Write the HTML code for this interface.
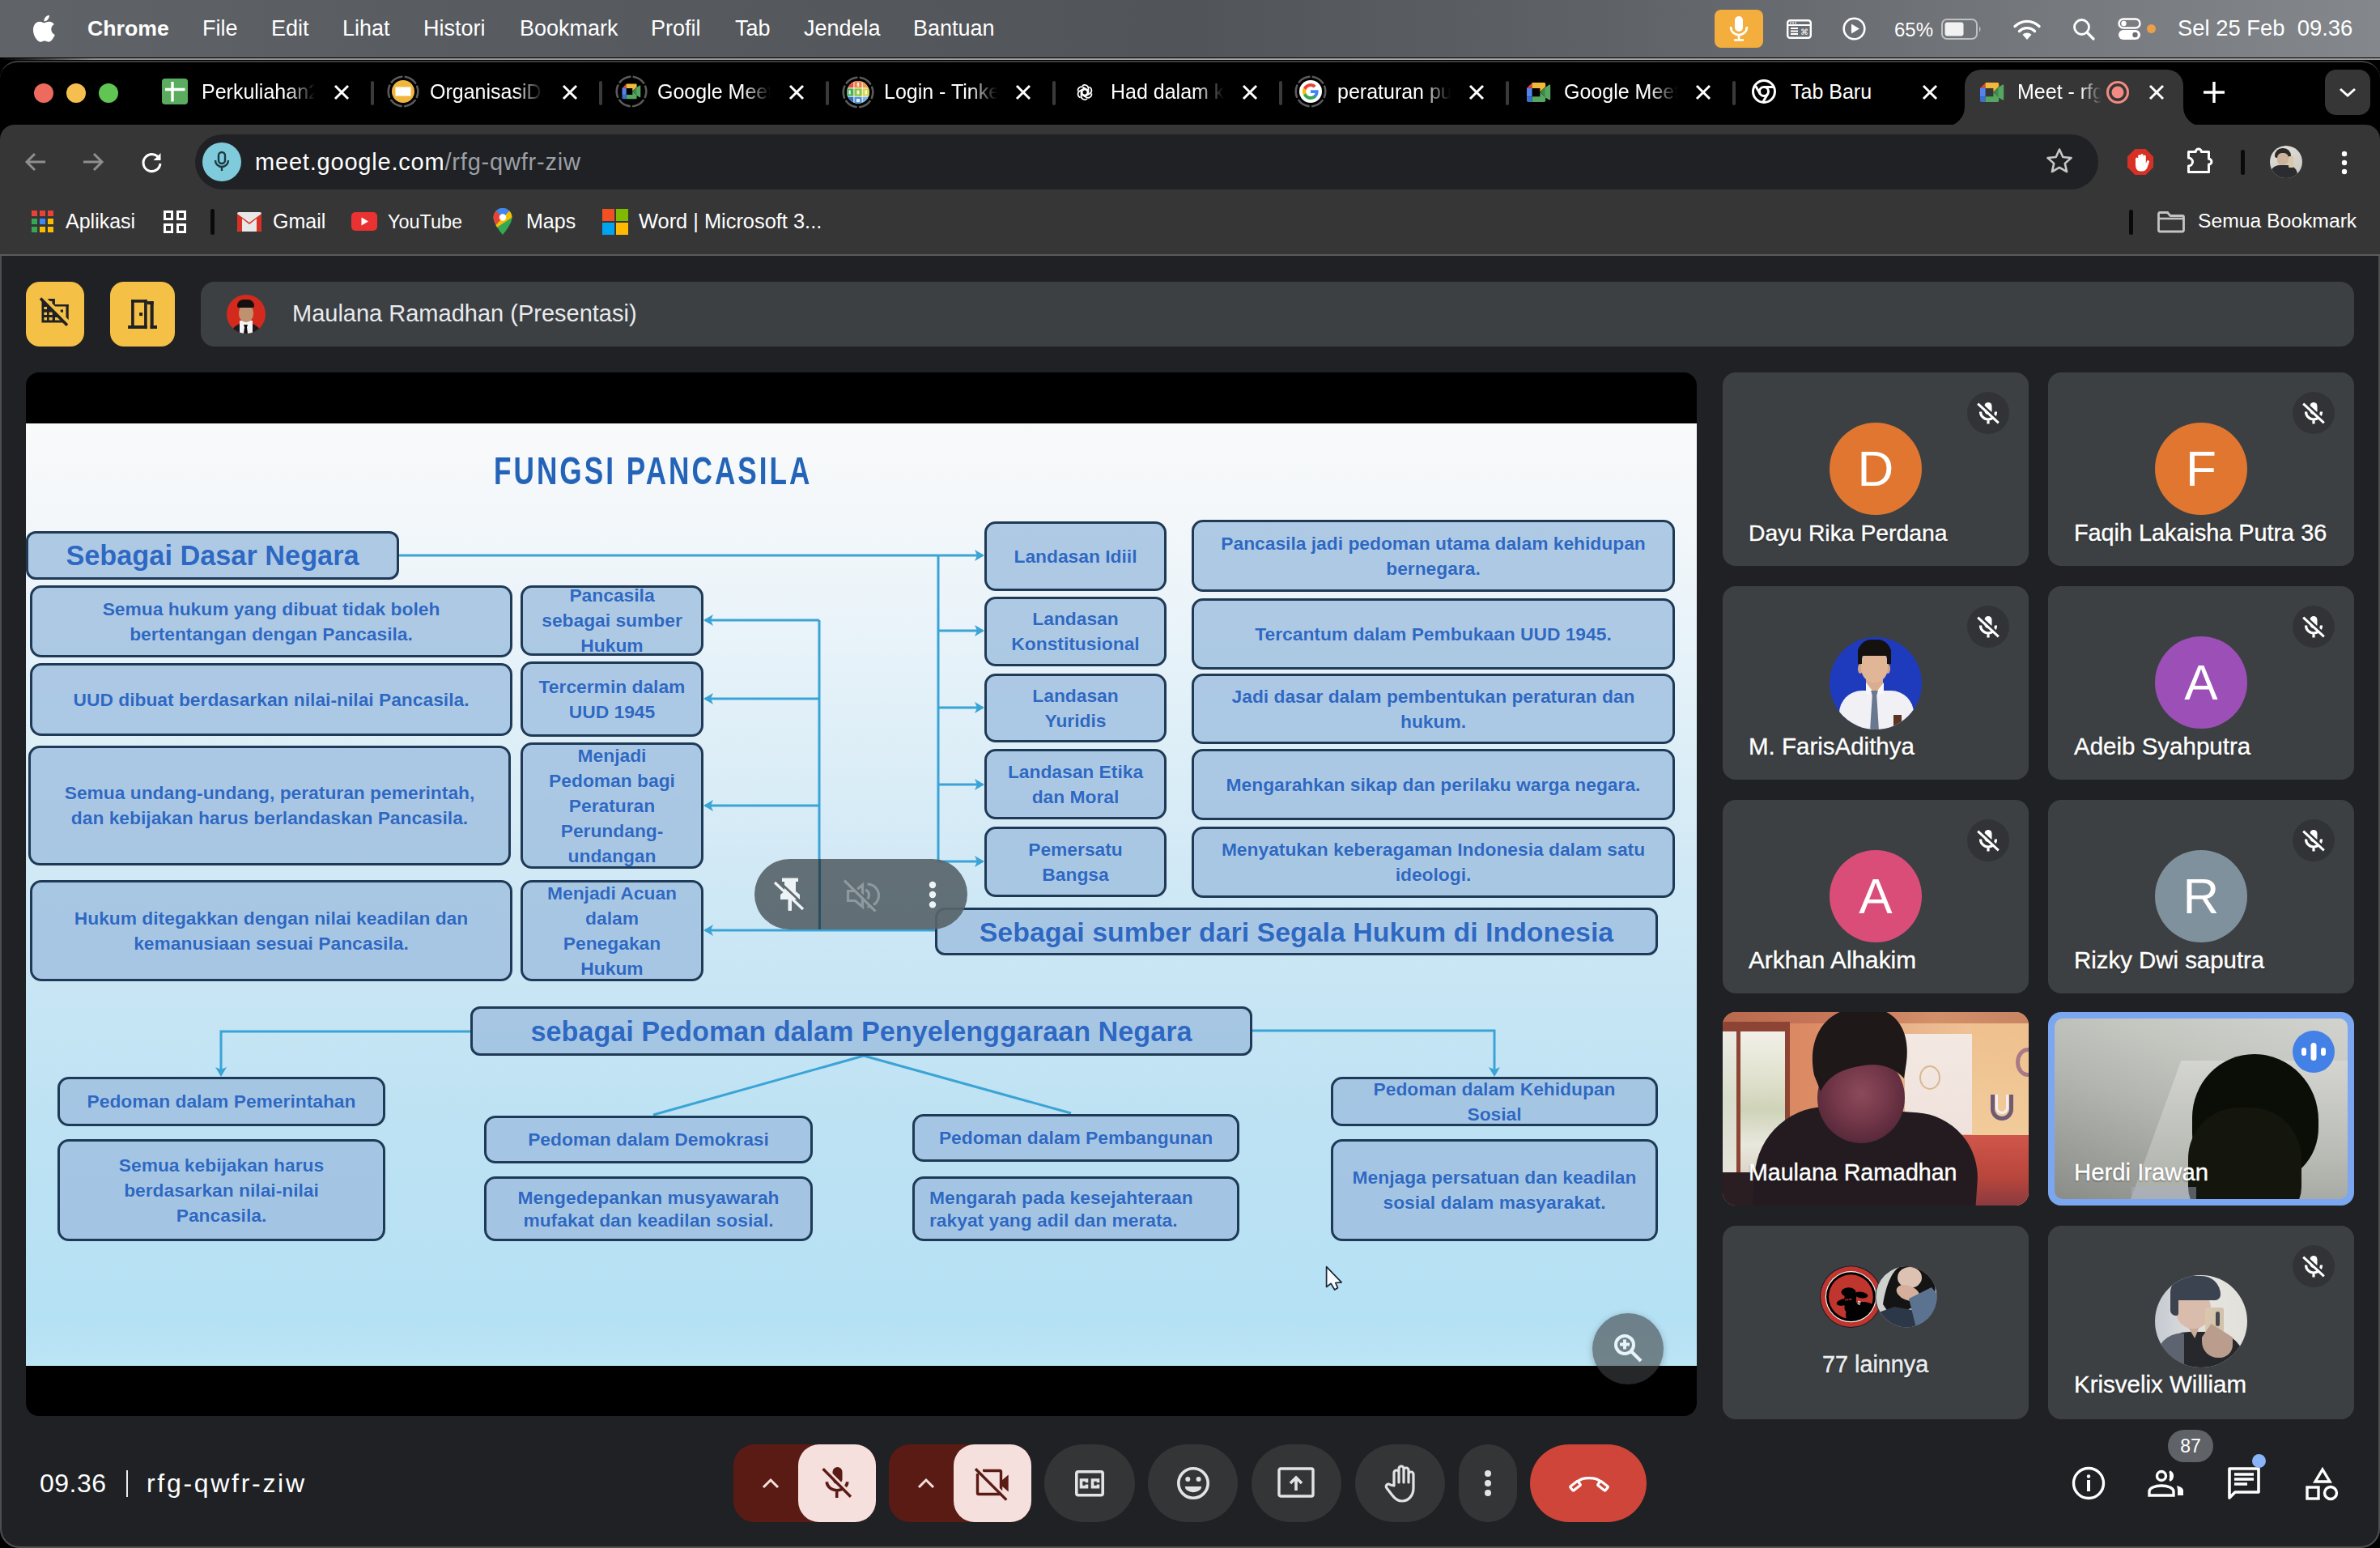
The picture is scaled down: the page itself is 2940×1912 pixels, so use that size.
<!DOCTYPE html>
<html><head><meta charset="utf-8">
<style>
*{margin:0;padding:0;box-sizing:border-box}
html,body{width:2940px;height:1912px;overflow:hidden;background:#000;font-family:"Liberation Sans",sans-serif}
.a{position:absolute}
svg{position:absolute;overflow:visible}
#menubar{left:0;top:0;width:2940px;height:72px;background:linear-gradient(90deg,#606368 0%,#585b60 20%,#515459 50%,#5f6267 68%,#74777b 85%,#84878b 100%)}
.mi{position:absolute;top:18px;font-size:27px;color:#fff;line-height:34px;white-space:nowrap}
#tabstrip{left:0;top:75px;width:2940px;height:97px;background:#000;border-radius:22px 22px 0 0;border-top:2px solid #3e3e3e}
#toolbar{left:0;top:154px;width:2940px;height:162px;background:#363636;border-radius:18px 18px 0 0}
#meet{left:0;top:316px;width:2940px;height:1596px;background:#202124;border-radius:0 0 24px 24px}
.tt{position:absolute;top:98px;font-size:25px;line-height:30px;color:#fff;white-space:nowrap;overflow:hidden;width:140px;-webkit-mask-image:linear-gradient(90deg,#000 75%,transparent 100%)}
.tsep{position:absolute;top:100px;width:4px;height:30px;background:#3a3a3a;border-radius:2px}
.bm{position:absolute;top:258px;font-size:25px;line-height:30px;color:#fff;white-space:nowrap}
.bx{position:absolute;border:3px solid #1f3a56;border-radius:14px;background:rgba(158,190,222,0.8);display:flex;align-items:center;justify-content:center;overflow:visible}
.bx.big{border-radius:12px}
.bt{font-weight:bold;color:#2d68c2;white-space:nowrap;width:100%;text-shadow:0 0 1px rgba(255,255,255,.4)}
.tn{position:absolute;font-size:28.3px;line-height:36px;color:#fff;white-space:nowrap;text-shadow:0 1px 2px rgba(0,0,0,.6);-webkit-text-stroke:0.4px #fff}
.av{position:absolute;width:114px;height:114px;border-radius:50%;color:#fff;font-size:62px;line-height:114px;text-align:center}
</style></head>
<body>
<!-- MENU BAR -->
<div id="menubar" class="a">
<svg style="left:40px;top:18px" width="28" height="34" viewBox="0 0 28 34"><path fill="#fff" d="M23.3 18.1c0-4.1 3.4-6.1 3.5-6.2-1.9-2.8-4.9-3.2-6-3.2-2.5-.3-5 1.5-6.3 1.5-1.3 0-3.3-1.5-5.4-1.4-2.8 0-5.4 1.6-6.8 4.1-2.9 5.1-.7 12.6 2.1 16.7 1.4 2 3 4.2 5.2 4.2 2.1-.1 2.9-1.4 5.4-1.4s3.2 1.4 5.4 1.3c2.3 0 3.7-2 5-4.1 1.6-2.3 2.3-4.6 2.3-4.7-.1 0-4.4-1.7-4.4-6.8zM19.2 5.9c1.1-1.4 1.9-3.3 1.7-5.2-1.6.1-3.6 1.1-4.8 2.5-1 1.2-2 3.1-1.7 5 1.8.1 3.7-.9 4.8-2.3z"/></svg>
<div class="mi" style="left:108px;font-weight:bold;font-size:26.7px">Chrome</div>
<div class="mi" style="left:250px">File</div>
<div class="mi" style="left:335px">Edit</div>
<div class="mi" style="left:423px">Lihat</div>
<div class="mi" style="left:523px">Histori</div>
<div class="mi" style="left:642px">Bookmark</div>
<div class="mi" style="left:804px">Profil</div>
<div class="mi" style="left:908px">Tab</div>
<div class="mi" style="left:993px">Jendela</div>
<div class="mi" style="left:1128px">Bantuan</div>
<!-- status icons -->
<div class="a" style="left:2118px;top:12px;width:60px;height:47px;background:#f3ae3d;border-radius:8px"></div>
<svg style="left:2134px;top:18px" width="28" height="34" viewBox="0 0 28 34"><rect x="9" y="2" width="10" height="19" rx="5" fill="#fff"/><path d="M4 15c0 6 4.5 10 10 10s10-4 10-10" fill="none" stroke="#fff" stroke-width="2.6"/><path d="M14 25v6M8 31.5h12" stroke="#fff" stroke-width="2.6"/></svg>
<svg style="left:2207px;top:24px" width="31" height="24" viewBox="0 0 31 24"><rect x="1.2" y="1.2" width="28.6" height="21.6" rx="3" fill="none" stroke="#fff" stroke-width="2.4"/><path d="M1.5 7h28" stroke="#fff" stroke-width="2"/><circle cx="5" cy="4.2" r="1" fill="#fff"/><circle cx="8" cy="4.2" r="1" fill="#fff"/><circle cx="11" cy="4.2" r="1" fill="#fff"/><path d="M5 11h9M5 14.5h9M5 18h9" stroke="#fff" stroke-width="1.8"/><text x="16.5" y="19" font-size="10" fill="#fff" font-family="Liberation Sans">⌘</text></svg>
<svg style="left:2276px;top:21px" width="29" height="29" viewBox="0 0 29 29"><circle cx="14.5" cy="14.5" r="12.8" fill="none" stroke="#fff" stroke-width="2.6"/><path d="M11 8.5v12l10-6z" fill="#fff"/></svg>
<div class="mi" style="left:2340px;font-size:24px;top:20px">65%</div>
<svg style="left:2398px;top:23px" width="52" height="26" viewBox="0 0 52 26"><rect x="1" y="1" width="43" height="24" rx="6" fill="none" stroke="#bfc1c3" stroke-width="2"/><rect x="4.5" y="4.5" width="23" height="17" rx="3" fill="#f2f2f2"/><path d="M47 9.5c2 1 2 6 0 7z" fill="#bfc1c3"/></svg>
<svg style="left:2486px;top:22px" width="36" height="28" viewBox="0 0 36 28"><path d="M18 27l-5.5-6.2a8 8 0 0 1 11 0z" fill="#fff"/><path d="M8.5 16.5a13.5 13.5 0 0 1 19 0" fill="none" stroke="#fff" stroke-width="3.4" stroke-linecap="round"/><path d="M3 10.5a21.5 21.5 0 0 1 30 0" fill="none" stroke="#fff" stroke-width="3.4" stroke-linecap="round"/></svg>
<svg style="left:2560px;top:22px" width="28" height="28" viewBox="0 0 28 28"><circle cx="11.5" cy="11.5" r="9" fill="none" stroke="#fff" stroke-width="2.8"/><path d="M18 18l8 8" stroke="#fff" stroke-width="3.2" stroke-linecap="round"/></svg>
<svg style="left:2616px;top:22px" width="30" height="28" viewBox="0 0 30 28"><rect x="1.5" y="1.5" width="26" height="11" rx="5.5" fill="none" stroke="#fff" stroke-width="2.4"/><circle cx="7.5" cy="7" r="3.2" fill="#fff"/><rect x="1" y="15" width="27" height="12" rx="6" fill="#fff"/><circle cx="21.5" cy="21" r="3.2" fill="#6a6d71"/></svg>
<div class="a" style="left:2652px;top:30px;width:11px;height:11px;border-radius:50%;background:#e9a049"></div>
<div class="mi" style="left:2690px;font-size:27.4px">Sel 25 Feb&nbsp; 09.36</div>
</div>
<!-- TAB STRIP -->
<div class="a" style="left:0;top:71px;width:2940px;height:6px;background:#000"></div>
<div class="a" style="left:0;top:72px;width:2940px;height:1.5px;background:linear-gradient(90deg,rgba(160,162,164,0) 0%,rgba(160,162,164,.9) 4%,#a4a6a8 60%,#9a9c9e 100%)"></div>
<div id="tabstrip" class="a"></div>
<div class="a" style="left:42px;top:103px;width:24px;height:24px;border-radius:50%;background:#ed6a5e"></div>
<div class="a" style="left:82px;top:103px;width:24px;height:24px;border-radius:50%;background:#f5bf4f"></div>
<div class="a" style="left:122px;top:103px;width:24px;height:24px;border-radius:50%;background:#61c554"></div>
<!-- active tab -->
<div class="a" style="left:2427px;top:86px;width:270px;height:70px;background:#363636;border-radius:20px 20px 0 0"></div>
<svg style="left:2403px;top:131px" width="25" height="25" viewBox="0 0 25 25"><path d="M25 0V25H0A24 24 0 0 0 24 1V0z" fill="#363636"/></svg>
<svg style="left:2696px;top:131px" width="25" height="25" viewBox="0 0 25 25"><path d="M0 0V25H25A24 24 0 0 1 1 1V0z" fill="#363636"/></svg>
<!-- tab 1 -->
<svg style="left:200px;top:97px" width="32" height="32" viewBox="0 0 32 32"><rect width="32" height="32" rx="4" fill="#5aad5e"/><path d="M4 13.5h24.5M13 4v24.5" stroke="#fff" stroke-width="3.4"/></svg>
<div class="tt" style="left:249px">Perkuliahan2</div>
<svg style="left:412px;top:104px" width="20" height="20" viewBox="0 0 20 20"><path d="M2 2l16 16M18 2L2 18" stroke="#fff" stroke-width="3"/></svg>
<div class="tsep" style="left:458px"></div>
<!-- tab 2 -->
<svg style="left:478px;top:93px" width="40" height="40" viewBox="0 0 40 40"><circle cx="20" cy="20" r="18.3" fill="none" stroke="#5a5a5a" stroke-width="2.6" stroke-dasharray="14.6 4.6" stroke-dashoffset="7.4" stroke-linecap="round"/><circle cx="20" cy="20" r="14" fill="#f1b73c"/><rect x="10.5" y="14.5" width="19" height="11" fill="#fff"/></svg>
<div class="tt" style="left:531px">OrganisasiDa</div>
<svg style="left:694px;top:104px" width="20" height="20" viewBox="0 0 20 20"><path d="M2 2l16 16M18 2L2 18" stroke="#fff" stroke-width="3"/></svg>
<div class="tsep" style="left:740px"></div>
<!-- tab 3 -->
<svg style="left:760px;top:93px" width="40" height="40" viewBox="0 0 40 40"><circle cx="20" cy="20" r="18.3" fill="none" stroke="#5a5a5a" stroke-width="2.6" stroke-dasharray="14.6 4.6" stroke-dashoffset="7.4" stroke-linecap="round"/><g transform="translate(8.5,10.5) scale(0.78)"><path d="M0 6.8L6.6 0.4V6.8z" fill="#e5483a"/><path d="M6.6 0H21.5Q23.2 0 23.2 1.7V5L16.4 11.6V7H6.6z" fill="#f1b93b"/><rect x="0" y="6.8" width="6.6" height="10.4" fill="#5384ee"/><path d="M0 17.2H6.6V24H1.7Q0 24 0 22.3z" fill="#3a6fd4"/><path d="M6.6 17.2H16.4V12L23.2 18.2V22.3Q23.2 24 21.5 24H6.6z" fill="#55a661"/><path d="M16.4 11.8L23.2 5.2V18.3z" fill="#3e8a4b"/><path d="M22.6 6.2L27.8 2.6Q29.2 2 29.2 3.5V20.5Q29.2 22 27.8 21.4L22.6 18.2z" fill="#55a661"/></g></svg>
<div class="tt" style="left:812px">Google Meet</div>
<svg style="left:974px;top:104px" width="20" height="20" viewBox="0 0 20 20"><path d="M2 2l16 16M18 2L2 18" stroke="#fff" stroke-width="3"/></svg>
<div class="tsep" style="left:1020px"></div>
<!-- tab 4 -->
<svg style="left:1040px;top:94px" width="40" height="40" viewBox="0 0 40 40"><defs><clipPath id="tkc"><circle cx="20" cy="20" r="13.9"/></clipPath></defs><circle cx="20" cy="20" r="18.3" fill="none" stroke="#5a5a5a" stroke-width="2.6" stroke-dasharray="14.6 4.6" stroke-dashoffset="7.4" stroke-linecap="round"/><g clip-path="url(#tkc)"><rect x="5" y="5" width="30" height="30" fill="#f4f4f4"/><rect x="5" y="5" width="9.3" height="9.3" fill="#e9503a"/><rect x="15.4" y="5" width="9.2" height="9.3" fill="#ee7d45"/><rect x="25.7" y="5" width="9.3" height="9.3" fill="#f29a45"/><rect x="5" y="15.4" width="9.3" height="9.2" fill="#4caf5a"/><rect x="15.4" y="15.4" width="9.2" height="9.2" fill="#8cc43a"/><rect x="25.7" y="15.4" width="9.3" height="9.2" fill="#d8d84a"/><rect x="5" y="25.7" width="9.3" height="9.3" fill="#2f6fc4"/><rect x="15.4" y="25.7" width="9.2" height="9.3" fill="#4f94d4"/><rect x="25.7" y="25.7" width="9.3" height="9.3" fill="#78b4e4"/></g><g fill="#fff" opacity=".85"><rect x="18.8" y="8" width="2.4" height="5"/><rect x="8.5" y="17.5" width="2.2" height="5"/><rect x="18.5" y="17.5" width="3" height="5"/><rect x="28.5" y="17.5" width="2.6" height="5"/><rect x="18" y="28" width="4" height="4"/></g></svg>
<div class="tt" style="left:1092px">Login - Tinker</div>
<svg style="left:1254px;top:104px" width="20" height="20" viewBox="0 0 20 20"><path d="M2 2l16 16M18 2L2 18" stroke="#fff" stroke-width="3"/></svg>
<div class="tsep" style="left:1300px"></div>
<!-- tab 5 chatgpt -->
<svg style="left:1328px;top:102px" width="24" height="24" viewBox="0 0 32 32"><g fill="none" stroke="#fff" stroke-width="2.3"><g transform="rotate(0 16 16)"><path d="M12 5.5a6 6 0 0 1 10 4v8l-6 3.5"/></g><g transform="rotate(60 16 16)"><path d="M12 5.5a6 6 0 0 1 10 4v8l-6 3.5"/></g><g transform="rotate(120 16 16)"><path d="M12 5.5a6 6 0 0 1 10 4v8l-6 3.5"/></g><g transform="rotate(180 16 16)"><path d="M12 5.5a6 6 0 0 1 10 4v8l-6 3.5"/></g><g transform="rotate(240 16 16)"><path d="M12 5.5a6 6 0 0 1 10 4v8l-6 3.5"/></g><g transform="rotate(300 16 16)"><path d="M12 5.5a6 6 0 0 1 10 4v8l-6 3.5"/></g></g></svg>
<div class="tt" style="left:1372px">Had dalam k</div>
<svg style="left:1534px;top:104px" width="20" height="20" viewBox="0 0 20 20"><path d="M2 2l16 16M18 2L2 18" stroke="#fff" stroke-width="3"/></svg>
<div class="tsep" style="left:1580px"></div>
<!-- tab 6 google -->
<svg style="left:1599px;top:93px" width="40" height="40" viewBox="0 0 40 40"><circle cx="20" cy="20" r="18.3" fill="none" stroke="#5a5a5a" stroke-width="2.6" stroke-dasharray="14.6 4.6" stroke-dashoffset="7.4" stroke-linecap="round"/><circle cx="20" cy="20" r="14" fill="#fff"/><g transform="translate(10,10) scale(0.833)"><path d="M23.5 12.3c0-.8-.1-1.6-.2-2.3H12v4.4h6.5a5.5 5.5 0 0 1-2.4 3.6v3h3.9c2.2-2.1 3.5-5.1 3.5-8.7z" fill="#4285f4"/><path d="M12 24c3.2 0 6-1.1 8-2.9l-3.9-3c-1.1.7-2.5 1.2-4.1 1.2-3.1 0-5.8-2.1-6.7-5H1.3v3.1A12 12 0 0 0 12 24z" fill="#34a853"/><path d="M5.3 14.3a7.2 7.2 0 0 1 0-4.6V6.6H1.3a12 12 0 0 0 0 10.8z" fill="#fbbc04"/><path d="M12 4.8c1.8 0 3.3.6 4.6 1.8l3.4-3.4A12 12 0 0 0 1.3 6.6l4 3.1c.9-2.8 3.6-4.9 6.7-4.9z" fill="#ea4335"/></g></svg>
<div class="tt" style="left:1652px">peraturan pu</div>
<svg style="left:1814px;top:104px" width="20" height="20" viewBox="0 0 20 20"><path d="M2 2l16 16M18 2L2 18" stroke="#fff" stroke-width="3"/></svg>
<div class="tsep" style="left:1860px"></div>
<!-- tab 7 meet -->
<svg style="left:1886px;top:102px" width="30" height="24" viewBox="0 0 30 24"><path d="M0 6.8L6.6 0.4V6.8z" fill="#e5483a"/><path d="M6.6 0H21.5Q23.2 0 23.2 1.7V5L16.4 11.6V7H6.6z" fill="#f1b93b"/><rect x="0" y="6.8" width="6.6" height="10.4" fill="#5384ee"/><path d="M0 17.2H6.6V24H1.7Q0 24 0 22.3z" fill="#3a6fd4"/><path d="M6.6 17.2H16.4V12L23.2 18.2V22.3Q23.2 24 21.5 24H6.6z" fill="#55a661"/><path d="M16.4 11.8L23.2 5.2V18.3z" fill="#3e8a4b"/><path d="M22.6 6.2L27.8 2.6Q29.2 2 29.2 3.5V20.5Q29.2 22 27.8 21.4L22.6 18.2z" fill="#55a661"/></svg>
<div class="tt" style="left:1932px">Google Meet</div>
<svg style="left:2094px;top:104px" width="20" height="20" viewBox="0 0 20 20"><path d="M2 2l16 16M18 2L2 18" stroke="#fff" stroke-width="3"/></svg>
<div class="tsep" style="left:2140px"></div>
<!-- tab 8 chrome -->
<svg style="left:2164px;top:98px" width="30" height="30" viewBox="0 0 30 30"><circle cx="15" cy="15" r="13.5" fill="none" stroke="#fff" stroke-width="3"/><circle cx="15" cy="15" r="5.5" fill="none" stroke="#fff" stroke-width="3"/><path d="M15 9.5h12M10.2 17.8L4.5 8M19.8 17.8l-6 10.3" stroke="#fff" stroke-width="3"/></svg>
<div class="tt" style="left:2212px;-webkit-mask-image:none">Tab Baru</div>
<svg style="left:2374px;top:104px" width="20" height="20" viewBox="0 0 20 20"><path d="M2 2l16 16M18 2L2 18" stroke="#fff" stroke-width="3"/></svg>
<!-- tab 9 active meet -->
<svg style="left:2446px;top:102px" width="30" height="24" viewBox="0 0 30 24"><path d="M0 6.8L6.6 0.4V6.8z" fill="#e5483a"/><path d="M6.6 0H21.5Q23.2 0 23.2 1.7V5L16.4 11.6V7H6.6z" fill="#f1b93b"/><rect x="0" y="6.8" width="6.6" height="10.4" fill="#5384ee"/><path d="M0 17.2H6.6V24H1.7Q0 24 0 22.3z" fill="#3a6fd4"/><path d="M6.6 17.2H16.4V12L23.2 18.2V22.3Q23.2 24 21.5 24H6.6z" fill="#55a661"/><path d="M16.4 11.8L23.2 5.2V18.3z" fill="#3e8a4b"/><path d="M22.6 6.2L27.8 2.6Q29.2 2 29.2 3.5V20.5Q29.2 22 27.8 21.4L22.6 18.2z" fill="#55a661"/></svg>
<div class="tt" style="left:2492px;width:104px">Meet - rfg-qwfr-ziw</div>
<svg style="left:2600px;top:98px" width="32" height="32" viewBox="0 0 32 32"><circle cx="16" cy="16" r="12.5" fill="none" stroke="#f28b82" stroke-width="3"/><circle cx="16" cy="16" r="7.5" fill="#f28b82"/></svg>
<svg style="left:2654px;top:104px" width="20" height="20" viewBox="0 0 20 20"><path d="M2 2l16 16M18 2L2 18" stroke="#fff" stroke-width="3"/></svg>
<svg style="left:2720px;top:99px" width="30" height="30" viewBox="0 0 30 30"><path d="M15 2v26M2 15h26" stroke="#fff" stroke-width="3.4"/></svg>
<div class="a" style="left:2872px;top:86px;width:56px;height:56px;border-radius:14px;background:#363636"></div>
<svg style="left:2888px;top:106px" width="24" height="16" viewBox="0 0 24 16"><path d="M3 4l9 8 9-8" fill="none" stroke="#fff" stroke-width="3"/></svg>
<!-- TOOLBAR -->
<div id="toolbar" class="a"></div>
<div class="a" style="left:0;top:314px;width:2940px;height:2px;background:#5b5b5b"></div>
<svg style="left:30px;top:186px" width="28" height="28" viewBox="0 0 28 28"><path d="M26 14H4M13 4L3 14l10 10" fill="none" stroke="#8e8e8e" stroke-width="3"/></svg>
<svg style="left:101px;top:186px" width="28" height="28" viewBox="0 0 28 28"><path d="M2 14h22M15 4l10 10-10 10" fill="none" stroke="#8e8e8e" stroke-width="3"/></svg>
<svg style="left:174px;top:186px" width="28" height="28" viewBox="0 0 28 28"><path d="M23 10.5A10.5 10.5 0 1 0 24 16" fill="none" stroke="#fff" stroke-width="3"/><path d="M24.5 3v9h-9z" fill="#fff"/></svg>
<div class="a" style="left:241px;top:166px;width:2351px;height:68px;border-radius:34px;background:#202124"></div>
<div class="a" style="left:250px;top:176px;width:48px;height:48px;border-radius:50%;background:#7fcbdc"></div>
<svg style="left:262px;top:186px" width="24" height="28" viewBox="0 0 24 28"><rect x="8" y="2" width="8" height="14" rx="4" fill="none" stroke="#1b3a40" stroke-width="2.4"/><path d="M4 12a8 8 0 0 0 16 0M12 20v5" fill="none" stroke="#1b3a40" stroke-width="2.4"/></svg>
<div class="a" style="left:315px;top:182px;font-size:29px;line-height:36px;color:#fff;white-space:nowrap;letter-spacing:0.8px">meet.google.com<span style="color:#9aa0a6">/rfg-qwfr-ziw</span></div>
<svg style="left:2526px;top:181px" width="36" height="36" viewBox="0 0 36 36"><path d="M18 3.5l4.3 9.5 10.2 1-7.7 6.9 2.3 10.1L18 25.8 8.9 31l2.3-10.1L3.5 14l10.2-1z" fill="none" stroke="#c4c7c5" stroke-width="2.6" stroke-linejoin="round"/></svg>
<svg style="left:2628px;top:184px" width="32" height="32" viewBox="0 0 32 32"><path d="M9.4 0h13.2L32 9.4v13.2L22.6 32H9.4L0 22.6V9.4z" fill="#d93025"/><path d="M10 19V12a1.6 1.6 0 0 1 3.2 0v5V8.5a1.6 1.6 0 0 1 3.2 0V16V7.5a1.6 1.6 0 0 1 3.2 0V16V9a1.6 1.6 0 0 1 3.2 0v9l1.2-3a1.6 1.6 0 0 1 3 1l-2.5 7c-1 2.5-3 4.5-6.5 4.5h-2C12 27.5 10 24 10 19z" fill="#fff"/></svg>
<svg style="left:2700px;top:180px" width="36" height="36" viewBox="0 0 36 36"><path d="M3.5 7.5H12.2A3.6 3.6 0 0 1 19.4 7.5H28.5V16.3A3.4 3.4 0 0 1 28.5 23.1V32.5H3.5V25A5 5 0 0 0 3.5 15Z" fill="none" stroke="#fff" stroke-width="3" stroke-linejoin="round"/></svg>
<div class="a" style="left:2768px;top:185px;width:5px;height:31px;background:#0a0a0a;border-radius:3px"></div>
<div class="a" style="left:2804px;top:180px;width:40px;height:40px;border-radius:50%;background:linear-gradient(160deg,#e3e1dc,#c9c5be);overflow:hidden"><div class="a" style="left:6px;top:3px;width:20px;height:12px;border-radius:10px 10px 3px 3px;background:#2c2a28"></div><div class="a" style="left:9px;top:9px;width:14px;height:15px;border-radius:40%;background:#cdb39b"></div><div class="a" style="left:0px;top:24px;width:34px;height:20px;border-radius:12px 12px 0 0;background:#2b2c2f"></div><div class="a" style="left:23px;top:13px;width:6px;height:14px;border-radius:1px;background:#d9c7a9"></div></div>
<svg style="left:2890px;top:186px" width="12" height="30" viewBox="0 0 12 30"><circle cx="6" cy="4" r="3.2" fill="#fff"/><circle cx="6" cy="15" r="3.2" fill="#fff"/><circle cx="6" cy="26" r="3.2" fill="#fff"/></svg>
<!-- BOOKMARKS -->
<svg style="left:39px;top:260px" width="27" height="27" viewBox="0 0 27 27"><rect x="0" y="0" width="7" height="7" fill="#ea4335"/><rect x="10" y="0" width="7" height="7" fill="#ea4335"/><rect x="20" y="0" width="7" height="7" fill="#ea4335"/><rect x="0" y="10" width="7" height="7" fill="#34a853"/><rect x="10" y="10" width="7" height="7" fill="#4285f4"/><rect x="20" y="10" width="7" height="7" fill="#fbbc04"/><rect x="0" y="20" width="7" height="7" fill="#34a853"/><rect x="10" y="20" width="7" height="7" fill="#fbbc04"/><rect x="20" y="20" width="7" height="7" fill="#fbbc04"/></svg>
<div class="bm" style="left:81px">Aplikasi</div>
<svg style="left:202px;top:260px" width="28" height="28" viewBox="0 0 28 28"><g fill="none" stroke="#fff" stroke-width="3"><rect x="1.5" y="1.5" width="9" height="9"/><rect x="17.5" y="1.5" width="9" height="9"/><rect x="1.5" y="17.5" width="9" height="9"/><rect x="17.5" y="17.5" width="9" height="9"/></g></svg>
<div class="a" style="left:260px;top:258px;width:5px;height:32px;background:#0a0a0a;border-radius:3px"></div>
<svg style="left:293px;top:262px" width="30" height="24" viewBox="0 0 30 24"><rect x="0" y="0" width="30" height="24" rx="2" fill="#e8e8e8"/><path d="M0 2v20a2 2 0 0 0 2 2h4V8l9 7 9-7v16h4a2 2 0 0 0 2-2V2L15 13z" fill="#d93025"/></svg>
<div class="bm" style="left:337px">Gmail</div>
<svg style="left:434px;top:262px" width="32" height="23" viewBox="0 0 32 23"><rect width="32" height="23" rx="5" fill="#ea3233"/><path d="M12.5 6.5v10l8.5-5z" fill="#fff"/></svg>
<div class="bm" style="left:479px;font-size:23.4px;top:259px">YouTube</div>
<svg style="left:609px;top:257px" width="24" height="34" viewBox="0 0 24 34"><path d="M12 0a11.5 11.5 0 0 0-11.5 11.5C.5 20 12 33 12 33s11.5-13 11.5-21.5A11.5 11.5 0 0 0 12 0z" fill="#34a853"/><path d="M12 0a11.5 11.5 0 0 0-8.2 3.4L12 12l8.2-8.6A11.5 11.5 0 0 0 12 0z" fill="#4285f4"/><path d="M3.8 3.4A11.5 11.5 0 0 0 .5 11.5c0 3 1.5 6.5 3 9.5L12 12z" fill="#ea4335"/><path d="M20.2 3.4L12 12l-8.5 9c.5 1 1 2 1.5 2.8L23.5 11.5a11.5 11.5 0 0 0-3.3-8.1z" fill="#fbbc04"/><circle cx="12" cy="11.5" r="4.2" fill="#fff"/></svg>
<div class="bm" style="left:650px">Maps</div>
<svg style="left:744px;top:258px" width="32" height="32" viewBox="0 0 32 32"><rect x="0" y="0" width="15" height="15" fill="#f25022"/><rect x="17" y="0" width="15" height="15" fill="#7fba00"/><rect x="0" y="17" width="15" height="15" fill="#00a4ef"/><rect x="17" y="17" width="15" height="15" fill="#ffb900"/></svg>
<div class="bm" style="left:789px;font-size:25.4px">Word | Microsoft 3...</div>
<div class="a" style="left:2630px;top:259px;width:5px;height:31px;background:#0a0a0a;border-radius:3px"></div>
<svg style="left:2665px;top:261px" width="34" height="27" viewBox="0 0 34 27"><path d="M1.5 3a1.5 1.5 0 0 1 1.5-1.5h9.5l3.5 4h15a1.5 1.5 0 0 1 1.5 1.5v16.5a1.5 1.5 0 0 1-1.5 1.5H3a1.5 1.5 0 0 1-1.5-1.5z" fill="none" stroke="#c4c4c4" stroke-width="2.8"/><path d="M2 9h30" stroke="#c4c4c4" stroke-width="2.6"/></svg>
<div class="bm" style="left:2715px;font-size:24.7px">Semua Bookmark</div>
<!-- MEET -->
<div id="meet" class="a"></div>
<div class="a" style="left:0;top:316px;width:2940px;height:1596px;border:2px solid #4d4e50;border-top:0;border-radius:0 0 24px 24px"></div>
<div class="a" style="left:32px;top:348px;width:72px;height:80px;border-radius:17px;background:#f4c046"></div>
<svg style="left:48px;top:367px" width="40" height="40" viewBox="0 0 40 40"><g fill="#202124"><rect x="10.3" y="2" width="9.6" height="3"/><rect x="16.4" y="5" width="3.5" height="6.5"/><rect x="16.4" y="9" width="20.3" height="2.5"/><rect x="33.5" y="9" width="3.2" height="19.3"/><rect x="26.7" y="15.5" width="3.3" height="3.2"/></g><path d="M5 -0.5L38 32.7" stroke="#f4c046" stroke-width="4.5"/><polygon points="3.5,3 3.5,31.5 32,31.5" fill="#202124"/><g fill="#f4c046"><rect x="6.4" y="12" width="3.6" height="3"/><rect x="6.4" y="18.7" width="3.6" height="3.3"/><rect x="12.7" y="18.7" width="4" height="3.3"/><rect x="6.4" y="25" width="3.6" height="3.5"/><rect x="12.7" y="25" width="4" height="3.5"/><polygon points="20,25 23.5,25 27,28.5 20,28.5"/></g><path d="M2 1.5L35 34.7" stroke="#202124" stroke-width="3.6"/></svg>
<div class="a" style="left:136px;top:348px;width:80px;height:80px;border-radius:17px;background:#f4c046"></div>
<svg style="left:156px;top:368px" width="40" height="40" viewBox="0 0 40 40"><g fill="#202124"><rect x="2.1" y="34" width="23.6" height="4"/><rect x="29.6" y="34" width="8.4" height="4"/><rect x="6.1" y="2.1" width="3.6" height="32"/><rect x="6.1" y="2.1" width="19.6" height="3.6"/><rect x="22.1" y="2.1" width="3.6" height="36"/><rect x="25.7" y="4.1" width="8" height="4"/><rect x="29.6" y="4.1" width="4.1" height="34"/><rect x="16.1" y="18.1" width="4" height="4"/></g></svg>
<div class="a" style="left:248px;top:348px;width:2660px;height:80px;border-radius:17px;background:#3c4043"></div>
<div class="a" style="left:280px;top:364px;width:48px;height:48px;border-radius:50%;background:#d42a1e;overflow:hidden">
 <div class="a" style="left:4px;top:35px;width:40px;height:20px;border-radius:18px 18px 0 0;background:#1c1c1e"></div>
 <div class="a" style="left:15.5px;top:32px;width:16px;height:16px;background:#f4f4f6"></div>
 <div class="a" style="left:21px;top:37px;width:5px;height:11px;background:#111;clip-path:polygon(0 0,100% 0,80% 30%,100% 100%,0 100%,20% 30%)"></div>
 <div class="a" style="left:14.5px;top:12px;width:18.5px;height:22px;border-radius:45% 45% 48% 48%;background:#c0916f"></div>
 <div class="a" style="left:13px;top:6px;width:21px;height:10px;border-radius:10px 10px 3px 3px;background:#141010"></div>
</div>
<div class="a" style="left:361px;top:369px;font-size:29px;line-height:36px;color:#e8eaed;white-space:nowrap">Maulana Ramadhan (Presentasi)</div>
<!-- presentation frame -->
<div class="a" style="left:32px;top:460px;width:2064px;height:1289px;border-radius:16px;background:#000;overflow:hidden">
 <div id="slide" class="a" style="left:0;top:63px;width:2064px;height:1164px;background:linear-gradient(180deg,#f9fafa 0%,#f3f7fa 10%,#e6f2f9 25%,#cfe8f5 50%,#bde2f3 75%,#b5e1f4 95%,#bce5f5 100%)">
 <div class="a" style="left:578px;top:33px;font-size:47.5px;line-height:52px;font-weight:bold;color:#2464b8;white-space:nowrap;transform:scaleX(0.74);transform-origin:0 0;letter-spacing:4.1px">FUNGSI PANCASILA</div>
<svg class="a" style="left:0;top:0" width="2064" height="1164" viewBox="0 0 2064 1164"><g stroke="#3aa4d6" stroke-width="3" fill="none"><path d="M461,163 L1182,163"/><polygon points="1184,163 1172,156 1175,163 1172,170" fill="#3aa4d6" stroke="none"/><path d="M1127,163 L1127,541"/><path d="M1127,256 L1182,256"/><polygon points="1184,256 1172,249 1175,256 1172,263" fill="#3aa4d6" stroke="none"/><path d="M1127,351 L1182,351"/><polygon points="1184,351 1172,344 1175,351 1172,358" fill="#3aa4d6" stroke="none"/><path d="M1127,446 L1182,446"/><polygon points="1184,446 1172,439 1175,446 1172,453" fill="#3aa4d6" stroke="none"/><path d="M1127,541 L1182,541"/><polygon points="1184,541 1172,534 1175,541 1172,548" fill="#3aa4d6" stroke="none"/><path d="M980,243 L980,626"/><path d="M980,243 L839,243"/><polygon points="837,243 849,236 846,243 849,250" fill="#3aa4d6" stroke="none"/><path d="M980,340 L839,340"/><polygon points="837,340 849,333 846,340 849,347" fill="#3aa4d6" stroke="none"/><path d="M980,472 L839,472"/><polygon points="837,472 849,465 846,472 849,479" fill="#3aa4d6" stroke="none"/><path d="M980,626 L839,626"/><polygon points="837,626 849,619 846,626 849,633" fill="#3aa4d6" stroke="none"/><path d="M980,626 L1123,626"/><path d="M549,751 L241,751 L241,804"/><polygon points="241,807 234,795 241,798 248,795" fill="#3aa4d6" stroke="none"/><path d="M1515,750 L1814,750 L1814,804"/><polygon points="1814,807 1807,795 1814,798 1821,795" fill="#3aa4d6" stroke="none"/><path d="M1035,781 L775,854"/><path d="M1035,781 L1291,852"/></g></svg>
<div class="bx big" style="left:0px;top:133px;width:461px;height:60px"><div class="bt" style="font-size:34.3px;line-height:40px;text-align:center;padding-left:0px;margin-top:0px">Sebagai Dasar Negara</div></div>
<div class="bx" style="left:5px;top:200px;width:596px;height:89px"><div class="bt" style="font-size:22.8px;line-height:31px;text-align:center;padding-left:0px;margin-top:0px">Semua hukum yang dibuat tidak boleh<br>bertentangan dengan Pancasila.</div></div>
<div class="bx" style="left:5px;top:296px;width:596px;height:90px"><div class="bt" style="font-size:22.8px;line-height:31px;text-align:center;padding-left:0px;margin-top:0px">UUD dibuat berdasarkan nilai-nilai Pancasila.</div></div>
<div class="bx" style="left:3px;top:398px;width:596px;height:148px"><div class="bt" style="font-size:22.8px;line-height:31px;text-align:center;padding-left:0px;margin-top:0px">Semua undang-undang, peraturan pemerintah,<br>dan kebijakan harus berlandaskan Pancasila.</div></div>
<div class="bx" style="left:5px;top:564px;width:596px;height:125px"><div class="bt" style="font-size:22.8px;line-height:31px;text-align:center;padding-left:0px;margin-top:0px">Hukum ditegakkan dengan nilai keadilan dan<br>kemanusiaan sesuai Pancasila.</div></div>
<div class="bx" style="left:611px;top:200px;width:226px;height:87px"><div class="bt" style="font-size:22.8px;line-height:31px;text-align:center;padding-left:0px;margin-top:0px">Pancasila<br>sebagai sumber<br>Hukum</div></div>
<div class="bx" style="left:611px;top:294px;width:226px;height:93px"><div class="bt" style="font-size:22.8px;line-height:31px;text-align:center;padding-left:0px;margin-top:0px">Tercermin dalam<br>UUD 1945</div></div>
<div class="bx" style="left:611px;top:394px;width:226px;height:156px"><div class="bt" style="font-size:22.8px;line-height:31px;text-align:center;padding-left:0px;margin-top:0px">Menjadi<br>Pedoman bagi<br>Peraturan<br>Perundang-<br>undangan</div></div>
<div class="bx" style="left:611px;top:564px;width:226px;height:125px"><div class="bt" style="font-size:22.8px;line-height:31px;text-align:center;padding-left:0px;margin-top:0px">Menjadi Acuan<br>dalam<br>Penegakan<br>Hukum</div></div>
<div class="bx" style="left:1184px;top:121px;width:225px;height:86px"><div class="bt" style="font-size:22.8px;line-height:31px;text-align:center;padding-left:0px;margin-top:0px">Landasan Idiil</div></div>
<div class="bx" style="left:1184px;top:214px;width:225px;height:86px"><div class="bt" style="font-size:22.8px;line-height:31px;text-align:center;padding-left:0px;margin-top:0px">Landasan<br>Konstitusional</div></div>
<div class="bx" style="left:1184px;top:309px;width:225px;height:85px"><div class="bt" style="font-size:22.8px;line-height:31px;text-align:center;padding-left:0px;margin-top:0px">Landasan<br>Yuridis</div></div>
<div class="bx" style="left:1184px;top:402px;width:225px;height:87px"><div class="bt" style="font-size:22.8px;line-height:31px;text-align:center;padding-left:0px;margin-top:0px">Landasan Etika<br>dan Moral</div></div>
<div class="bx" style="left:1184px;top:498px;width:225px;height:87px"><div class="bt" style="font-size:22.8px;line-height:31px;text-align:center;padding-left:0px;margin-top:0px">Pemersatu<br>Bangsa</div></div>
<div class="bx" style="left:1440px;top:119px;width:597px;height:89px"><div class="bt" style="font-size:22.8px;line-height:31px;text-align:center;padding-left:0px;margin-top:0px">Pancasila jadi pedoman utama dalam kehidupan<br>bernegara.</div></div>
<div class="bx" style="left:1440px;top:216px;width:597px;height:88px"><div class="bt" style="font-size:22.8px;line-height:31px;text-align:center;padding-left:0px;margin-top:0px">Tercantum dalam Pembukaan UUD 1945.</div></div>
<div class="bx" style="left:1440px;top:309px;width:597px;height:87px"><div class="bt" style="font-size:22.8px;line-height:31px;text-align:center;padding-left:0px;margin-top:0px">Jadi dasar dalam pembentukan peraturan dan<br>hukum.</div></div>
<div class="bx" style="left:1440px;top:402px;width:597px;height:88px"><div class="bt" style="font-size:22.8px;line-height:31px;text-align:center;padding-left:0px;margin-top:0px">Mengarahkan sikap dan perilaku warga negara.</div></div>
<div class="bx" style="left:1440px;top:498px;width:597px;height:88px"><div class="bt" style="font-size:22.8px;line-height:31px;text-align:center;padding-left:0px;margin-top:0px">Menyatukan keberagaman Indonesia dalam satu<br>ideologi.</div></div>
<div class="bx big" style="left:1123px;top:598px;width:893px;height:59px"><div class="bt" style="font-size:33.9px;line-height:40px;text-align:center;padding-left:0px;margin-top:0px">Sebagai sumber dari Segala Hukum di Indonesia</div></div>
<div class="bx big" style="left:549px;top:720px;width:966px;height:61px"><div class="bt" style="font-size:34.2px;line-height:40px;text-align:center;padding-left:0px;margin-top:0px">sebagai Pedoman dalam Penyelenggaraan Negara</div></div>
<div class="bx" style="left:39px;top:807px;width:405px;height:61px"><div class="bt" style="font-size:22.8px;line-height:31px;text-align:center;padding-left:0px;margin-top:0px">Pedoman dalam Pemerintahan</div></div>
<div class="bx" style="left:39px;top:884px;width:405px;height:126px"><div class="bt" style="font-size:22.8px;line-height:31px;text-align:center;padding-left:0px;margin-top:0px">Semua kebijakan harus<br>berdasarkan nilai-nilai<br>Pancasila.</div></div>
<div class="bx" style="left:566px;top:855px;width:406px;height:59px"><div class="bt" style="font-size:22.8px;line-height:31px;text-align:center;padding-left:0px;margin-top:0px">Pedoman dalam Demokrasi</div></div>
<div class="bx" style="left:566px;top:930px;width:406px;height:80px"><div class="bt" style="font-size:22.8px;line-height:28px;text-align:center;padding-left:0px;margin-top:0px">Mengedepankan musyawarah<br>mufakat dan keadilan sosial.</div></div>
<div class="bx" style="left:1095px;top:853px;width:404px;height:59px"><div class="bt" style="font-size:22.8px;line-height:31px;text-align:center;padding-left:0px;margin-top:0px">Pedoman dalam Pembangunan</div></div>
<div class="bx" style="left:1095px;top:930px;width:404px;height:80px"><div class="bt" style="font-size:22.8px;line-height:28px;text-align:left;padding-left:18px;margin-top:0px">Mengarah pada kesejahteraan<br>rakyat yang adil dan merata.</div></div>
<div class="bx" style="left:1612px;top:807px;width:404px;height:61px"><div class="bt" style="font-size:22.8px;line-height:31px;text-align:center;padding-left:0px;margin-top:0px">Pedoman dalam Kehidupan<br>Sosial</div></div>
<div class="bx" style="left:1612px;top:884px;width:404px;height:126px"><div class="bt" style="font-size:22.8px;line-height:31px;text-align:center;padding-left:0px;margin-top:0px">Menjaga persatuan dan keadilan<br>sosial dalam masyarakat.</div></div>
<div class="a" style="left:1935px;top:1099px;width:88px;height:88px;border-radius:50%;background:rgba(62,65,67,0.6);box-shadow:0 2px 8px rgba(0,0,0,.25)"></div>
<svg class="a" style="left:1960px;top:1123px" width="44" height="44" viewBox="0 0 44 44"><circle cx="15" cy="15" r="11" fill="none" stroke="#e8f4fa" stroke-width="4"/><path d="M15 8.5v12M9 14.5h12" stroke="#e8f4fa" stroke-width="3.8"/><path d="M23 23l12 12" stroke="#e8f4fa" stroke-width="4.2"/></svg>
<svg class="a" style="left:1605px;top:1040px" width="22" height="32" viewBox="0 0 22 32"><path d="M1.6 1.7V26.5L7 22.3L11.7 30L15.5 27.7L12.8 21.5L20.2 20.9Z" fill="#f8fbff" stroke="#1b2733" stroke-width="1.7" stroke-linejoin="round"/></svg>
<div class="a" style="left:900px;top:538px;width:263px;height:87px;border-radius:44px;background:rgba(88,100,106,0.92)"></div>
<div class="a" style="left:979px;top:538px;width:3px;height:87px;background:rgba(30,70,90,0.75)"></div>
<svg class="a" style="left:923px;top:561px" width="40" height="44" viewBox="0 0 40 44"><path d="M11 0.5h20v4.5h-3v12l5 4v6H9v-6l5-4v-12h-3z" fill="#eef4f6"/><rect x="18.5" y="26" width="4.5" height="15" rx="1" fill="#eef4f6"/><path d="M3.5 4.5L38.5 37.5" stroke="#5f6a6f" stroke-width="2.6" transform="translate(1.8,-1.8)"/><path d="M2 6L37 39" stroke="#eef4f6" stroke-width="3.2"/></svg>
<svg class="a" style="left:1010px;top:561px" width="44" height="44" viewBox="0 0 44 44"><g fill="none" stroke="#8d999d" stroke-width="3.2"><path d="M5.5 16.5h9l9-7.5v27l-9-7.5h-9z"/><path d="M27 15a7 7 0 0 1 0 13M29.5 8a14 14 0 0 1 0 28"/></g><path d="M1 3.5L39.5 41.5" stroke="#5f6a6f" stroke-width="2.4" transform="translate(1.8,-1.8)"/><path d="M1 3.5L39.5 41.5" stroke="#8d999d" stroke-width="3.2"/></svg>
<svg class="a" style="left:1112px;top:562px" width="16" height="40" viewBox="0 0 16 40"><circle cx="8" cy="8" r="4.2" fill="#eef4f6"/><circle cx="8" cy="20" r="4.2" fill="#eef4f6"/><circle cx="8" cy="32.4" r="4.2" fill="#eef4f6"/></svg>

 </div>
</div>
<div class="a" style="left:2128px;top:460px;width:378px;height:239px;border-radius:16px;background:#3c4043;overflow:hidden"></div>
<div class="av" style="left:2260px;top:522px;background:#e0762f">D</div>
<svg class="a" style="left:2430px;top:484px" width="52" height="52" viewBox="0 0 52 52"><circle cx="26" cy="26" r="26" fill="#323336"/><rect x="21.5" y="13" width="9" height="15" rx="4.5" fill="#fff"/><path d="M16.5 24.5a9.5 9.5 0 0 0 19 0M26 34v5.5" fill="none" stroke="#fff" stroke-width="3.2"/><path d="M13.2 14.6L38.8 38.3" stroke="#323336" stroke-width="3" transform="translate(1.7,-1.8)"/><path d="M13.2 14.6L38.8 38.3" stroke="#fff" stroke-width="3"/></svg>
<div class="tn" style="left:2160px;top:640px;font-size:28.3px">Dayu Rika Perdana</div>
<div class="a" style="left:2530px;top:460px;width:378px;height:239px;border-radius:16px;background:#3c4043;overflow:hidden"></div>
<div class="av" style="left:2662px;top:522px;background:#e0762f">F</div>
<svg class="a" style="left:2832px;top:484px" width="52" height="52" viewBox="0 0 52 52"><circle cx="26" cy="26" r="26" fill="#323336"/><rect x="21.5" y="13" width="9" height="15" rx="4.5" fill="#fff"/><path d="M16.5 24.5a9.5 9.5 0 0 0 19 0M26 34v5.5" fill="none" stroke="#fff" stroke-width="3.2"/><path d="M13.2 14.6L38.8 38.3" stroke="#323336" stroke-width="3" transform="translate(1.7,-1.8)"/><path d="M13.2 14.6L38.8 38.3" stroke="#fff" stroke-width="3"/></svg>
<div class="tn" style="left:2562px;top:640px;font-size:28.8px">Faqih Lakaisha Putra 36</div>
<div class="a" style="left:2128px;top:724px;width:378px;height:239px;border-radius:16px;background:#3c4043;overflow:hidden"></div>
<div class="a" style="left:2260px;top:787px;width:114px;height:114px;border-radius:50%;background:#1f3bbd;overflow:hidden"><div class="a" style="left:45px;top:50px;width:21px;height:18px;background:#d9ad8f"></div><div class="a" style="left:12px;top:66px;width:92px;height:70px;border-radius:28px 28px 0 0;background:#f1f0f5"></div><div class="a" style="left:45px;top:56px;width:22px;height:14px;background:#f7f7fa;clip-path:polygon(0 0,50% 100%,100% 0,100% 100%,0 100%)"></div><div class="a" style="left:50px;top:66px;width:11px;height:50px;background:#69788e;clip-path:polygon(10% 0,90% 0,75% 12%,100% 100%,0 100%,25% 12%)"></div><div class="a" style="left:35px;top:33px;width:6px;height:12px;border-radius:50%;background:#d4a687"></div><div class="a" style="left:69px;top:33px;width:6px;height:12px;border-radius:50%;background:#d4a687"></div><div class="a" style="left:38.5px;top:16px;width:33px;height:40px;border-radius:42% 42% 46% 46%;background:#e1b697"></div><div class="a" style="left:35px;top:3px;width:41px;height:20px;border-radius:20px 20px 4px 4px;background:#15110f"></div><div class="a" style="left:35px;top:15px;width:5px;height:18px;background:#15110f"></div><div class="a" style="left:71px;top:15px;width:5px;height:18px;background:#15110f"></div><div class="a" style="left:79px;top:96px;width:10px;height:16px;background:#5a3522"></div></div>
<svg class="a" style="left:2430px;top:748px" width="52" height="52" viewBox="0 0 52 52"><circle cx="26" cy="26" r="26" fill="#323336"/><rect x="21.5" y="13" width="9" height="15" rx="4.5" fill="#fff"/><path d="M16.5 24.5a9.5 9.5 0 0 0 19 0M26 34v5.5" fill="none" stroke="#fff" stroke-width="3.2"/><path d="M13.2 14.6L38.8 38.3" stroke="#323336" stroke-width="3" transform="translate(1.7,-1.8)"/><path d="M13.2 14.6L38.8 38.3" stroke="#fff" stroke-width="3"/></svg>
<div class="tn" style="left:2160px;top:904px;font-size:29.5px">M. FarisAdithya</div>
<div class="a" style="left:2530px;top:724px;width:378px;height:239px;border-radius:16px;background:#3c4043;overflow:hidden"></div>
<div class="av" style="left:2662px;top:786px;background:#9c4fb7">A</div>
<svg class="a" style="left:2832px;top:748px" width="52" height="52" viewBox="0 0 52 52"><circle cx="26" cy="26" r="26" fill="#323336"/><rect x="21.5" y="13" width="9" height="15" rx="4.5" fill="#fff"/><path d="M16.5 24.5a9.5 9.5 0 0 0 19 0M26 34v5.5" fill="none" stroke="#fff" stroke-width="3.2"/><path d="M13.2 14.6L38.8 38.3" stroke="#323336" stroke-width="3" transform="translate(1.7,-1.8)"/><path d="M13.2 14.6L38.8 38.3" stroke="#fff" stroke-width="3"/></svg>
<div class="tn" style="left:2562px;top:904px;font-size:29.5px">Adeib Syahputra</div>
<div class="a" style="left:2128px;top:988px;width:378px;height:239px;border-radius:16px;background:#3c4043;overflow:hidden"></div>
<div class="av" style="left:2260px;top:1050px;background:#da4d78">A</div>
<svg class="a" style="left:2430px;top:1012px" width="52" height="52" viewBox="0 0 52 52"><circle cx="26" cy="26" r="26" fill="#323336"/><rect x="21.5" y="13" width="9" height="15" rx="4.5" fill="#fff"/><path d="M16.5 24.5a9.5 9.5 0 0 0 19 0M26 34v5.5" fill="none" stroke="#fff" stroke-width="3.2"/><path d="M13.2 14.6L38.8 38.3" stroke="#323336" stroke-width="3" transform="translate(1.7,-1.8)"/><path d="M13.2 14.6L38.8 38.3" stroke="#fff" stroke-width="3"/></svg>
<div class="tn" style="left:2160px;top:1168px;font-size:29.8px">Arkhan Alhakim</div>
<div class="a" style="left:2530px;top:988px;width:378px;height:239px;border-radius:16px;background:#3c4043;overflow:hidden"></div>
<div class="av" style="left:2662px;top:1050px;background:#7f919c">R</div>
<svg class="a" style="left:2832px;top:1012px" width="52" height="52" viewBox="0 0 52 52"><circle cx="26" cy="26" r="26" fill="#323336"/><rect x="21.5" y="13" width="9" height="15" rx="4.5" fill="#fff"/><path d="M16.5 24.5a9.5 9.5 0 0 0 19 0M26 34v5.5" fill="none" stroke="#fff" stroke-width="3.2"/><path d="M13.2 14.6L38.8 38.3" stroke="#323336" stroke-width="3" transform="translate(1.7,-1.8)"/><path d="M13.2 14.6L38.8 38.3" stroke="#fff" stroke-width="3"/></svg>
<div class="tn" style="left:2562px;top:1168px;font-size:29.4px">Rizky Dwi saputra</div>
<div class="a" style="left:2128px;top:1250px;width:378px;height:239px;border-radius:16px;overflow:hidden;background:linear-gradient(90deg,#d4805c 0%,#dc8c64 30%,#e9b48c 60%,#f0c496 85%,#eab88c 100%)">
<div class="a" style="left:0;top:0;width:378px;height:14px;background:linear-gradient(90deg,#b96a4e,#c9785a 40%,#d2906a 70%,#c98462)"></div>
<div class="a" style="left:0;top:12px;width:83px;height:190px;background:#8e4434"></div>
<div class="a" style="left:0;top:24px;width:17px;height:175px;background:linear-gradient(180deg,#ecebe2,#d8dccb 50%,#e6e4da)"></div>
<div class="a" style="left:22px;top:24px;width:55px;height:175px;background:linear-gradient(180deg,#f2f0e8 0%,#dfe0cc 35%,#cfd3b8 55%,#e8e8de 80%,#ddd4c6 100%)"></div>
<div class="a" style="left:225px;top:27px;width:84px;height:124px;background:linear-gradient(180deg,#f4e8e2,#efe2dc)"></div>
<div class="a" style="left:243px;top:66px;width:26px;height:30px;border-radius:50%;border:2px solid #d8b890"></div>
<div class="a" style="left:308px;top:14px;width:70px;height:145px;background:linear-gradient(180deg,#eec08e,#f2cc9c)"></div>
<div class="a" style="left:331px;top:102px;width:28px;height:32px;border-radius:0 0 14px 14px;border:5px solid #6e5a74;border-top:0;background:transparent"></div>
<div class="a" style="left:337px;top:102px;width:16px;height:24px;border-radius:0 0 8px 8px;border:3px solid #f4eef0;border-top:0"></div>
<div class="a" style="left:362px;top:44px;width:30px;height:36px;border-radius:50%;border:5px solid #a87a86;border-right-color:transparent"></div>
<div class="a" style="left:286px;top:152px;width:92px;height:87px;background:linear-gradient(180deg,#d0564a,#b8463c 60%,#8a3a40)"></div>
<div class="a" style="left:0;top:198px;width:120px;height:41px;background:#2a1e22"></div>
<div class="a" style="left:40px;top:120px;width:275px;height:160px;border-radius:90px 80px 0 0;background:#231b1f;transform:rotate(4deg)"></div>

<svg class="a" style="left:0;top:0" width="378" height="239" viewBox="0 0 378 239"><defs><radialGradient id="mface" cx="50%" cy="45%" r="55%"><stop offset="0" stop-color="#8c4a5a"/><stop offset=".55" stop-color="#74384a"/><stop offset="1" stop-color="#58293a"/></radialGradient></defs><ellipse cx="171" cy="106" rx="54" ry="56" fill="url(#mface)"/><path d="M113 78C104 34 124 -2 168 -6C214 -9 232 22 227 62L224 82C214 70 196 62 174 66C150 70 132 76 121 98Z" fill="#1e1819"/></svg>
</div>
<div class="tn" style="left:2160px;top:1430px;font-size:28.6px">Maulana Ramadhan</div>
<div class="a" style="left:2530px;top:1250px;width:378px;height:239px;border-radius:16px;overflow:hidden;background:#7ba7f0">
<div class="a" style="left:8px;top:8px;width:362px;height:223px;border-radius:10px;overflow:hidden;background:linear-gradient(200deg,#d2d3cf 0%,#c4c6c0 30%,#b3b6b0 55%,#9c9e99 80%,#8a8c88 100%)">
<div class="a" style="left:120px;top:52px;width:280px;height:200px;background:linear-gradient(180deg,#d4d5d1,#b8bab4 60%,#9fa19c);transform:skewX(-20deg)"></div>
<div class="a" style="left:170px;top:44px;width:156px;height:160px;border-radius:50% 52% 44% 40%;background:#0b0d07"></div>
<div class="a" style="left:165px;top:110px;width:140px;height:140px;border-radius:45% 45% 30% 30%;background:#14160e"></div>
<div class="a" style="left:95px;top:208px;width:80px;height:20px;background:#a9b4c8;opacity:.45"></div>
</div>
</div>
<div class="a" style="left:2832px;top:1273px;width:52px;height:52px;border-radius:50%;background:#4381e6"></div>
<svg class="a" style="left:2842px;top:1287px" width="32" height="24" viewBox="0 0 32 24"><rect x="1" y="7" width="6" height="10" rx="3" fill="#fff"/><rect x="12.5" y="1" width="7" height="22" rx="3.5" fill="#fff"/><rect x="25" y="7" width="6" height="10" rx="3" fill="#fff"/></svg>
<div class="tn" style="left:2562px;top:1430px;font-size:29.3px">Herdi Irawan</div>
<div class="a" style="left:2128px;top:1514px;width:378px;height:239px;border-radius:16px;background:#3c4043"></div>
<svg class="a" style="left:2240px;top:1556px" width="160" height="94" viewBox="0 0 160 94"><defs><clipPath id="oc1"><circle cx="46.4" cy="45.7" r="29"/></clipPath><clipPath id="oc2"><circle cx="115" cy="45.7" r="37.6"/></clipPath></defs>
<circle cx="46.4" cy="45.7" r="38.3" fill="#0d1a28"/><circle cx="46.4" cy="45.7" r="37.4" fill="#c0352e"/><circle cx="46.4" cy="45.7" r="31.6" fill="#f4f4f4"/><circle cx="46.4" cy="45.7" r="30.4" fill="#000"/><circle cx="46.4" cy="45.7" r="27.4" fill="#c0352e"/>
<g clip-path="url(#oc1)" fill="#000"><ellipse cx="61" cy="68" rx="21" ry="16"/><rect x="38.5" y="40" width="14.5" height="25" rx="5"/><ellipse cx="43.5" cy="40" rx="9" ry="5.8"/><ellipse cx="37" cy="52.3" rx="8.5" ry="4" transform="rotate(-15 37 52.3)"/><ellipse cx="59" cy="43.5" rx="8.5" ry="3.8" transform="rotate(8 59 43.5)"/></g>
<path d="M39.5 50.5a1.6 1.6 0 0 1 3.2 0M44 50a1.6 1.6 0 0 1 3.2 0" fill="none" stroke="#c0352e" stroke-width="1.1"/><path d="M55 51.5l3.5 1M54.5 54l3.5 1" stroke="#eee" stroke-width="1.4"/>
<circle cx="115" cy="45.7" r="38.8" fill="#3c4043"/>
<g clip-path="url(#oc2)"><rect x="75" y="5" width="80" height="90" fill="#cfd1cf"/>
<path d="M86 55C90 30 98 12 108 8H142C150 14 152 30 150 52L140 62L120 60L96 70Z" fill="#141414"/>
<ellipse cx="119" cy="22" rx="15" ry="13" fill="#ddc2b3"/>
<ellipse cx="117" cy="41" rx="15" ry="9" transform="rotate(22 117 41)" fill="#d6ae9c"/>
<path d="M78 66L100 58L122 62L140 48L160 40V95H78Z" fill="#2c3748"/>
<path d="M118 48L146 34L154 44L152 84L128 88Z" fill="#5b7390"/>
</g></svg>
<div class="tn" style="left:2251px;top:1667px;color:#e8eaed;font-size:28.8px">77 lainnya</div>
<div class="a" style="left:2530px;top:1514px;width:378px;height:239px;border-radius:16px;background:#3c4043;overflow:hidden"></div>
<div class="a" style="left:2662px;top:1575px;width:114px;height:114px;border-radius:50%;background:linear-gradient(90deg,#c5cad2 0%,#d6d8da 30%,#e6e4de 60%,#e2e0da 100%);overflow:hidden"><div class="a" style="left:2px;top:70px;width:110px;height:60px;border-radius:40px 40px 0 0;background:#26282c"></div><div class="a" style="left:2px;top:72px;width:34px;height:40px;border-radius:30px 0 0 0;background:#5d6470"></div><div class="a" style="left:36px;top:56px;width:22px;height:22px;background:#c9ab9a;clip-path:polygon(0 0,100% 0,60% 100%)"></div><div class="a" style="left:26px;top:22px;width:43px;height:44px;border-radius:40% 40% 48% 48%;background:#d9bcac"></div><div class="a" style="left:19px;top:1px;width:62px;height:30px;border-radius:30px 34px 10px 6px;background:#3b4350"></div><div class="a" style="left:19px;top:20px;width:10px;height:30px;border-radius:0 0 4px 8px;background:#3b4350"></div><div class="a" style="left:62px;top:40px;width:23px;height:35px;border-radius:3px;background:linear-gradient(90deg,#d9c8ac,#cfc2ae)"></div><div class="a" style="left:75px;top:45px;width:5px;height:18px;border-radius:3px;background:#4a4a4e"></div><div class="a" style="left:58px;top:60px;width:38px;height:42px;border-radius:14px 10px 16px 20px;background:#bb9d8e;clip-path:polygon(30% 0,100% 40%,100% 100%,0 100%,0 40%)"></div></div>
<svg class="a" style="left:2832px;top:1538px" width="52" height="52" viewBox="0 0 52 52"><circle cx="26" cy="26" r="26" fill="#323336"/><rect x="21.5" y="13" width="9" height="15" rx="4.5" fill="#fff"/><path d="M16.5 24.5a9.5 9.5 0 0 0 19 0M26 34v5.5" fill="none" stroke="#fff" stroke-width="3.2"/><path d="M13.2 14.6L38.8 38.3" stroke="#323336" stroke-width="3" transform="translate(1.7,-1.8)"/><path d="M13.2 14.6L38.8 38.3" stroke="#fff" stroke-width="3"/></svg>
<div class="tn" style="left:2562px;top:1692px;font-size:29.5px">Krisvelix William</div>
<!-- BOTTOM BAR -->
<div class="a" style="left:49px;top:1813px;font-size:32px;line-height:38px;color:#fff;white-space:nowrap;letter-spacing:0.5px">09.36</div>
<div class="a" style="left:155.5px;top:1815.5px;width:2px;height:33px;background:#e8eaed"></div>
<div class="a" style="left:181px;top:1813px;font-size:32px;line-height:38px;color:#fff;white-space:nowrap;letter-spacing:2.7px">rfg-qwfr-ziw</div>
<!-- mic group -->
<div class="a" style="left:906px;top:1784px;width:176px;height:96px;border-radius:26px;background:#5a1b15"></div>
<div class="a" style="left:986px;top:1784px;width:96px;height:96px;border-radius:26px;background:#f6e0dd"></div>
<svg class="a" style="left:938px;top:1822px" width="28" height="20" viewBox="0 0 28 20"><path d="M5 15l9-9 9 9" fill="none" stroke="#f6e0dd" stroke-width="3"/></svg>
<svg class="a" style="left:1012px;top:1806px" width="44" height="52" viewBox="0 0 44 52"><rect x="16.5" y="6" width="12" height="21" rx="6" fill="#5a1b15"/><path d="M9.3 24.3a12.7 10.4 0 0 0 25.4 0M21.7 34v10" fill="none" stroke="#5a1b15" stroke-width="3.6"/><path d="M4.6 8.3L38.9 42.7" stroke="#f6e0dd" stroke-width="3.2" transform="translate(2,-2)"/><path d="M4.6 8.3L38.9 42.7" stroke="#5a1b15" stroke-width="3.4"/></svg>
<!-- cam group -->
<div class="a" style="left:1098px;top:1784px;width:176px;height:96px;border-radius:26px;background:#5a1b15"></div>
<div class="a" style="left:1178px;top:1784px;width:96px;height:96px;border-radius:26px;background:#f6e0dd"></div>
<svg class="a" style="left:1130px;top:1822px" width="28" height="20" viewBox="0 0 28 20"><path d="M5 15l9-9 9 9" fill="none" stroke="#f6e0dd" stroke-width="3"/></svg>
<svg class="a" style="left:1202px;top:1808px" width="48" height="48" viewBox="0 0 48 48"><path d="M5.5 12v24a1.5 1.5 0 0 0 1.5 1.5h26a1.5 1.5 0 0 0 1.5-1.5v-26a1.5 1.5 0 0 0-1.5-1.5H12" fill="none" stroke="#5a1b15" stroke-width="3.4"/><path d="M35 21l8.7-7.5v21L35 27z" fill="#5a1b15"/><path d="M3 6.3L41.3 44.6" stroke="#f6e0dd" stroke-width="3" transform="translate(2,-2)"/><path d="M3 6.3L41.3 44.6" stroke="#5a1b15" stroke-width="3.4"/></svg>
<!-- cc -->
<div class="a" style="left:1290px;top:1784px;width:112px;height:96px;border-radius:48px;background:#333537"></div>
<svg class="a" style="left:1326px;top:1816px" width="40" height="34" viewBox="0 0 40 34"><rect x="3.8" y="1.8" width="32.4" height="29" rx="2.2" fill="none" stroke="#e3e3e3" stroke-width="3.6"/><path d="M16.5 15.2v-3.2h-7v8.6h7v-3.2M30.5 15.2v-3.2h-7v8.6h7v-3.2" fill="none" stroke="#e3e3e3" stroke-width="3.6"/></svg>
<!-- emoji -->
<div class="a" style="left:1418px;top:1784px;width:111px;height:96px;border-radius:48px;background:#333537"></div>
<svg class="a" style="left:1453px;top:1811px" width="42" height="42" viewBox="0 0 42 42"><circle cx="21" cy="21" r="18.2" fill="none" stroke="#e3e3e3" stroke-width="3.6"/><circle cx="14.3" cy="16" r="3" fill="#e3e3e3"/><circle cx="27.6" cy="16" r="3" fill="#e3e3e3"/><path d="M10.7 25h20.6a10.3 7.2 0 0 1-20.6 0z" fill="#e3e3e3"/></svg>
<!-- present -->
<div class="a" style="left:1546px;top:1784px;width:111px;height:96px;border-radius:48px;background:#333537"></div>
<svg class="a" style="left:1578px;top:1812px" width="46" height="40" viewBox="0 0 46 40"><rect x="2" y="2" width="42" height="34" rx="2" fill="none" stroke="#e3e3e3" stroke-width="3.4"/><path d="M23 29V14M16 20l7-7 7 7" fill="none" stroke="#e3e3e3" stroke-width="3.6"/></svg>
<!-- hand -->
<div class="a" style="left:1674px;top:1784px;width:111px;height:96px;border-radius:48px;background:#333537"></div>
<svg class="a" style="left:1711px;top:1807px" width="44" height="50" viewBox="0 0 44 50"><path d="M11 28V12a3 3 0 0 1 6 0v12V7a3 3 0 0 1 6 0v17V9a3 3 0 0 1 6 0v15V14a3 3 0 0 1 6 0v17c0 9-6 16-14 16-6 0-9-3-12-7l-7-9a3 3 0 0 1 4.5-4z" fill="none" stroke="#e3e3e3" stroke-width="3.2" stroke-linejoin="round"/></svg>
<!-- more -->
<div class="a" style="left:1802px;top:1784px;width:72px;height:96px;border-radius:36px;background:#333537"></div>
<svg class="a" style="left:1832px;top:1815px" width="12" height="36" viewBox="0 0 12 36"><circle cx="6" cy="5" r="4" fill="#e3e3e3"/><circle cx="6" cy="17" r="4" fill="#e3e3e3"/><circle cx="6" cy="29" r="4" fill="#e3e3e3"/></svg>
<!-- end call -->
<div class="a" style="left:1890px;top:1784px;width:144px;height:96px;border-radius:48px;background:#cf4539"></div>
<svg class="a" style="left:1939px;top:1818px" width="48" height="28" viewBox="0 0 48 28"><path d="M9.5 12.5C15 6 33 6 38.5 12.5" fill="none" stroke="#fff" stroke-width="3.4"/><rect x="1" y="14" width="12" height="6.5" rx="1.5" transform="rotate(-38 7 17.2)" fill="none" stroke="#fff" stroke-width="3.2"/><rect x="35" y="14" width="12" height="6.5" rx="1.5" transform="rotate(38 41 17.2)" fill="none" stroke="#fff" stroke-width="3.2"/></svg>
<!-- right icons -->
<svg class="a" style="left:2558px;top:1810px" width="44" height="44" viewBox="0 0 44 44"><circle cx="22" cy="22" r="18.5" fill="none" stroke="#fff" stroke-width="3.4"/><circle cx="22" cy="13.5" r="2.2" fill="#fff"/><rect x="20" y="18" width="4" height="14" fill="#fff"/></svg>
<svg class="a" style="left:2653px;top:1815px" width="46" height="34" viewBox="0 0 46 34"><circle cx="17" cy="8" r="5.5" fill="none" stroke="#fff" stroke-width="3.4"/><path d="M27 2.5a6 6 0 0 1 0 11" fill="#fff" stroke="#fff" stroke-width="3"/><path d="M2 32v-5c0-4 7-7 15-7s15 3 15 7v5z" fill="none" stroke="#fff" stroke-width="3.4"/><path d="M36 20c4 1 8 3 8 6v6h-7v-6c0-2-0.5-4-1-6z" fill="#fff"/></svg>
<div class="a" style="left:2678px;top:1766px;width:56px;height:40px;border-radius:20px;background:#5f6368"></div>
<div class="a" style="left:2678px;top:1769px;width:56px;font-size:23px;line-height:34px;text-align:center;color:#fff">87</div>
<svg class="a" style="left:2750px;top:1810px" width="44" height="44" viewBox="0 0 44 44"><path d="M4 4h36v29H11l-7 7z" fill="none" stroke="#fff" stroke-width="3.6" stroke-linejoin="round"/><path d="M10 11h24M10 17h24M10 23h16" stroke="#fff" stroke-width="3.4"/></svg>
<div class="a" style="left:2782px;top:1796px;width:17px;height:17px;border-radius:50%;background:#8ab4f8;border:0"></div>
<svg class="a" style="left:2848px;top:1812px" width="42" height="42" viewBox="0 0 42 42"><path d="M21 3l9 15H12z" fill="none" stroke="#fff" stroke-width="3.4" stroke-linejoin="miter"/><rect x="2" y="25" width="14" height="14" fill="none" stroke="#fff" stroke-width="3.4"/><circle cx="31" cy="32" r="7.5" fill="none" stroke="#fff" stroke-width="3.4"/></svg>
</body></html>
